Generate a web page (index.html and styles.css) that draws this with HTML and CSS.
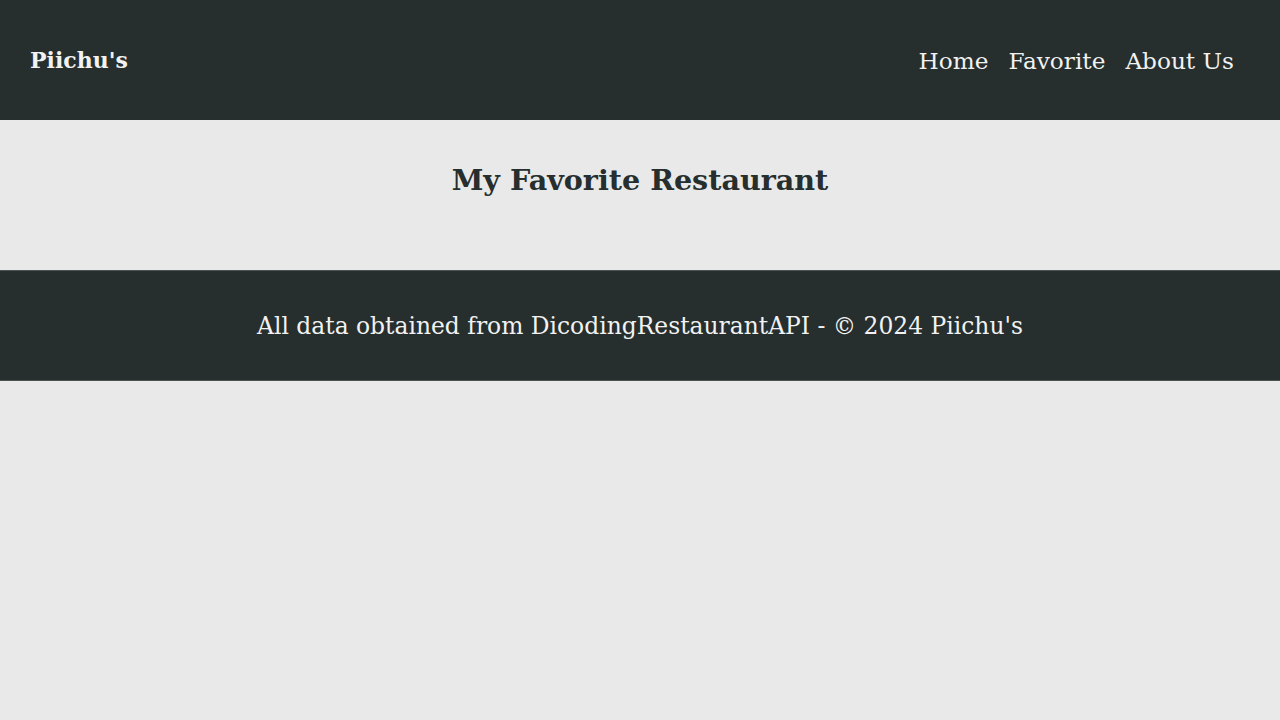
FILE: index.html
```html
<!DOCTYPE html>
<html lang="en">
<head>
<meta charset="utf-8">
<title>Piichu's</title>
<link rel="stylesheet" href="styles.css">
</head>
<body>
<header class="app-bar">
  <h1 class="brand">Piichu's</h1>
  <nav class="nav">
    <a href="#" class="nav-link">Home</a>
    <a href="#" class="nav-link">Favorite</a>
    <a href="#" class="nav-link">About Us</a>
  </nav>
</header>
<main class="content">
  <h2 class="page-title">My Favorite Restaurant</h2>
</main>
<footer class="footer">
  <p class="footer-text">All data obtained from DicodingRestaurantAPI - © 2024 Piichu's</p>
</footer>
</body>
</html>
```
FILE: styles.css
```css
* { box-sizing: border-box; }
html, body {
  margin: 0;
  padding: 0;
  background: #e9e9e9;
  font-family: "DejaVu Serif", serif;
  color: #262e2e;
}
.app-bar {
  height: 120px;
  background: #262e2e;
  display: flex;
  align-items: center;
  justify-content: space-between;
  padding: 0 46px 0 30px;
}
.brand {
  margin: 0;
  font-size: 22px;
  font-weight: bold;
  color: #f2f2f2;
}
.nav {
  display: flex;
  gap: 20px;
}
.nav-link {
  color: #f2f2f2;
  text-decoration: none;
  font-size: 23.2px;
}
.content {
  height: 150px;
  padding-top: 40px;
}
.page-title {
  margin: 0;
  text-align: center;
  font-size: 28.6px;
  font-weight: bold;
  line-height: 40px;
}
.footer {
  height: 111px;
  background: #262e2e;
  border-top: 1px solid #4a5252;
  border-bottom: 1px solid #4a5252;
  display: flex;
  align-items: center;
  justify-content: center;
}
.footer-text {
  margin: 0;
  color: #f2f2f2;
  font-size: 23.4px;
}
```
